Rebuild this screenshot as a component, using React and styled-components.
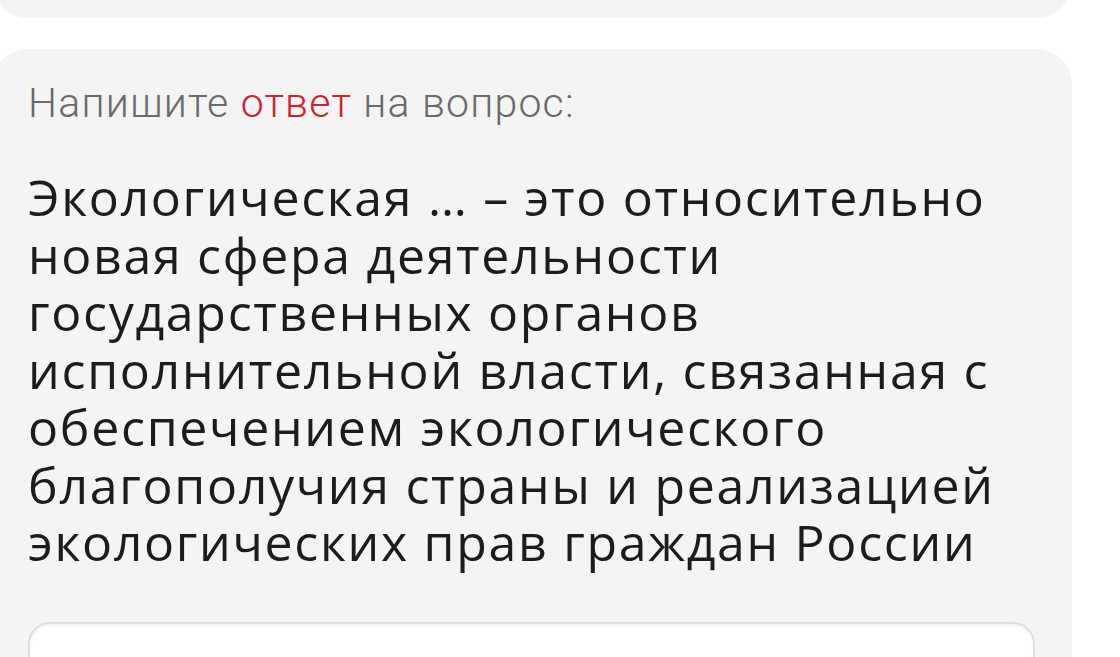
import React from 'react'
import styled, { createGlobalStyle } from 'styled-components'

const Global = createGlobalStyle`
    html, body {
        margin: 0;
        background: #ffffff;
    }

    body {
        overflow: hidden;
    }
`

const App = () => {
    return (
        <Page>
            <Global />
            <PrevCard />
            <Card>
                <Prompt>
                    Напишите <Accent>ответ</Accent> на вопрос:
                </Prompt>
                <Question>
                    Экологическая … – это относительно новая сфера
                    деятельности государственных органов исполнительной
                    власти, связанная с обеспечением экологического
                    благополучия страны и реализацией экологических прав
                    граждан России
                </Question>
                <AnswerInput type="text" />
            </Card>
        </Page>
    )
}

const Page = styled('main')`
    display: flex;
    flex-direction: column;
    gap: 31px;
    width: 1080px;
    margin-left: -8px;
`

const Card = styled('section')`
    background: #f4f4f4;
    border-radius: 36px;
    padding: 30px 37px 40px 36px;
    display: flex;
    flex-direction: column;
`

/* The previous question card, scrolled mostly out of view. */
const PrevCard = styled(Card)`
    height: 120px;
    margin-top: -102px;
    box-sizing: border-box;
`

const Prompt = styled('p')`
    margin: 0;
    font-family: Roboto, 'Liberation Sans', sans-serif;
    font-weight: 300;
    font-size: 41px;
    letter-spacing: 1.2px;
    line-height: 48px;
    color: #6a6a6a;
`

const Accent = styled('span')`
    color: #d2202c;
`

const Question = styled('h2')`
    margin: 42px 0 0;
    font-family: 'Open Sans', 'Noto Sans', sans-serif;
    font-weight: 400;
    font-size: 50px;
    letter-spacing: 1.7px;
    line-height: 57.5px;
    color: #1c1c1c;
`

const AnswerInput = styled('input')`
    margin-top: 50px;
    height: 80px;
    border: 2px solid #dedede;
    border-radius: 22px;
    background: #ffffff;
    box-shadow: inset 0 2px 3px rgba(0, 0, 0, 0.06);
    outline: none;
`

export default App
